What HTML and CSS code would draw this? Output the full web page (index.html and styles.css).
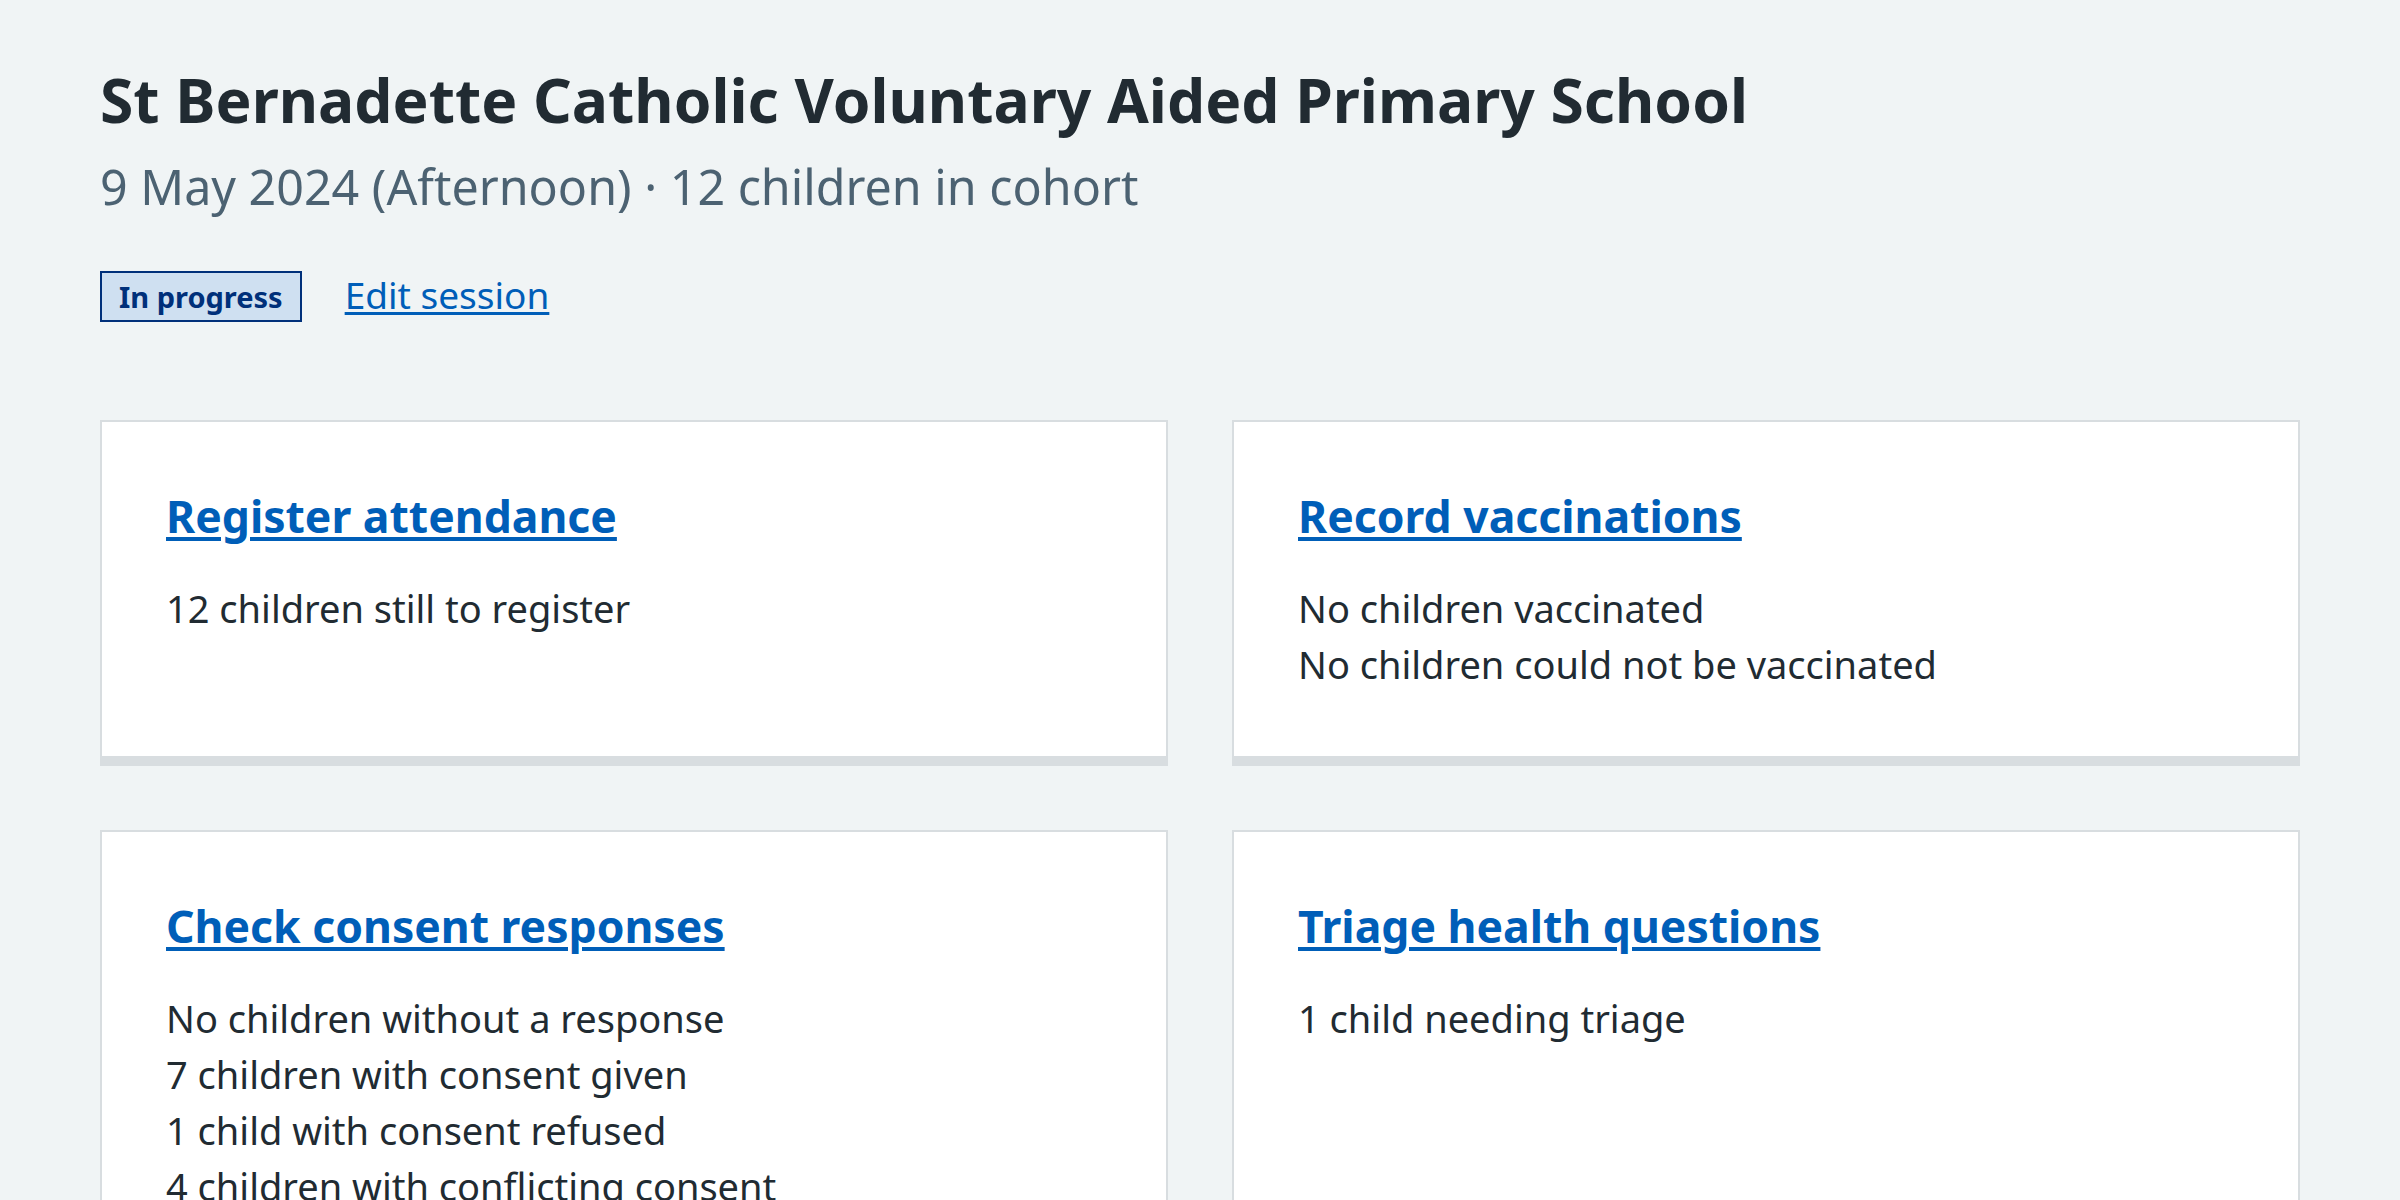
FILE: index.html
```html
<!DOCTYPE html>
<html lang="en">
<head>
<meta charset="utf-8">
<title>St Bernadette Catholic Voluntary Aided Primary School</title>
<link rel="stylesheet" href="styles.css">
</head>
<body>
<main class="page">
  <header class="session-header">
    <h1 class="title">St Bernadette Catholic Voluntary Aided Primary School</h1>
    <p class="caption">9 May 2024 (Afternoon) · 12 children in cohort</p>
    <div class="status-row">
      <strong class="tag">In progress</strong>
      <a class="edit-link" href="#">Edit session</a>
    </div>
  </header>
  <section class="cards">
    <div class="card">
      <h2 class="card-heading"><a href="#">Register attendance</a></h2>
      <ul class="card-list">
        <li>12 children still to register</li>
      </ul>
    </div>
    <div class="card">
      <h2 class="card-heading"><a href="#">Record vaccinations</a></h2>
      <ul class="card-list">
        <li>No children vaccinated</li>
        <li>No children could not be vaccinated</li>
      </ul>
    </div>
    <div class="card">
      <h2 class="card-heading"><a href="#">Check consent responses</a></h2>
      <ul class="card-list">
        <li>No children without a response</li>
        <li>7 children with consent given</li>
        <li>1 child with consent refused</li>
        <li>4 children with conflicting consent</li>
      </ul>
    </div>
    <div class="card">
      <h2 class="card-heading"><a href="#">Triage health questions</a></h2>
      <ul class="card-list">
        <li>1 child needing triage</li>
      </ul>
    </div>
  </section>
</main>
</body>
</html>
```
FILE: styles.css
```css
html, body {
  margin: 0;
  padding: 0;
  background: #f0f4f5;
}
body {
  font-family: "Noto Sans", "Open Sans", Arial, sans-serif;
  color: #212b32;
}
.page {
  padding: 60px 100px 0 100px;
}
.title {
  margin: 0 0 14px 0;
  font-size: 60.5px;
  line-height: 80px;
  font-weight: 700;
  color: #212b32;
}
.caption {
  margin: 0;
  font-size: 48.4px;
  line-height: 64px;
  color: #4c6272;
}
.status-row {
  display: flex;
  align-items: flex-start;
  gap: 43px;
  margin-top: 53px;
}
.tag {
  display: inline-block;
  border: 2px solid #00307a;
  background: #cfe0f1;
  color: #00307a;
  font-size: 29px;
  line-height: 31px;
  font-weight: 700;
  padding: 8px 17px;
}
.edit-link {
  color: #005eb8;
  font-size: 37px;
  line-height: 48px;
  text-decoration: underline;
  text-decoration-thickness: 3px;
  text-underline-offset: 3px;
}
.cards {
  display: grid;
  grid-template-columns: 1fr 1fr;
  column-gap: 64px;
  row-gap: 72px;
  margin-top: 98px;
}
.card {
  background: #ffffff;
  border: 2px solid #d8dde0;
  box-shadow: 0 8px 0 #d8dde0;
  padding: 62px 64px 64px 64px;
}
.card-heading {
  margin: 0 0 32px 0;
  font-size: 44.5px;
  line-height: 64px;
  font-weight: 700;
}
.card-heading a {
  color: #005eb8;
  text-decoration: underline;
  text-decoration-thickness: 4px;
  text-underline-offset: 4px;
}
.card-list {
  list-style: none;
  margin: 0;
  padding: 0;
  font-size: 38px;
  line-height: 56px;
}
```
